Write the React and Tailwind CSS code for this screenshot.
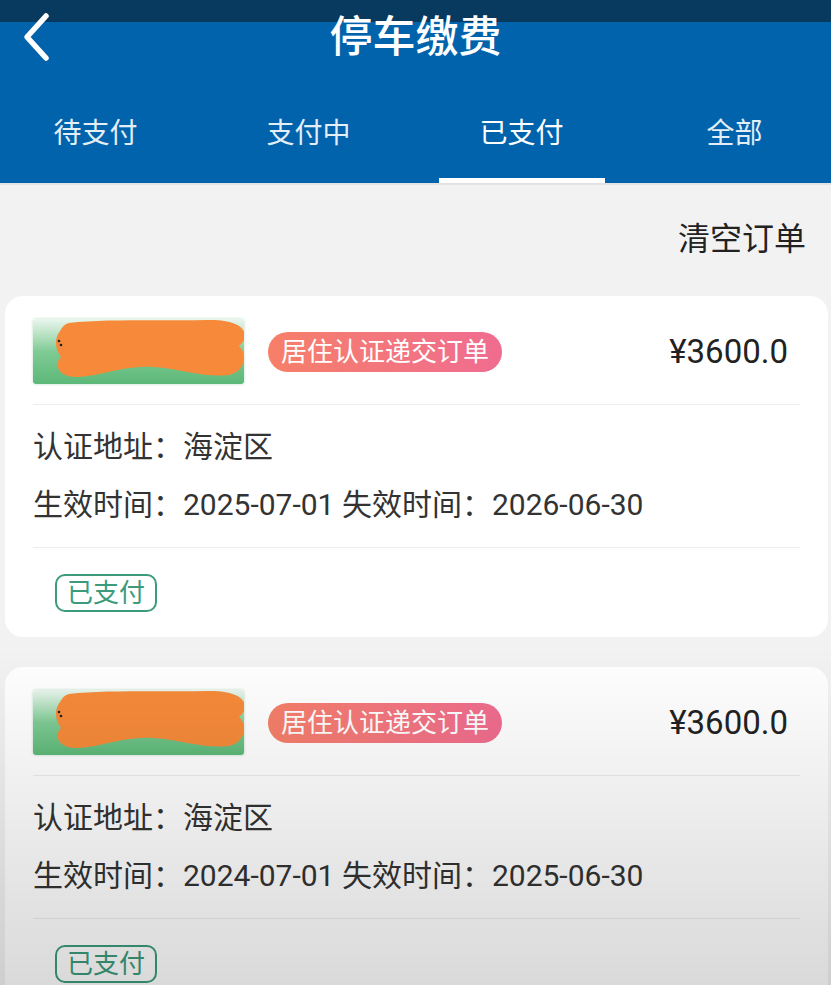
import React from 'react';

const orders = [
    { addr: '海淀区', start: '2025-07-01', end: '2026-06-30' },
    { addr: '海淀区', start: '2024-07-01', end: '2025-06-30' },
];

const tabs = ['待支付', '支付中', '已支付', '全部'];

function Plate() {
    return (
        <div className="relative w-[211px] h-[65px] shrink-0 rounded-[3px] bg-gradient-to-b from-[#eaf6ee] via-[#7fcb95] to-[#5cb878] shadow-[0_0_3px_rgba(80,170,110,0.4)]">
            <svg className="absolute inset-0" width="211" height="65" viewBox="0 0 211 65">
                <path
                    d="M36 4 C70 0 120 2 175 1 C214 0 218 18 206 27 C215 35 212 53 196 56 C170 59 150 50 120 48 C90 46 70 57 45 58 C26 59 20 46 28 38 C22 30 21 20 27 12 C30 7 32 5 36 4 Z"
                    fill="#f68a3a"
                />
                <circle cx="26" cy="22" r="1.3" fill="#222" />
                <circle cx="28" cy="26" r="1.3" fill="#222" />
            </svg>
        </div>
    );
}

function OrderCard({ o }) {
    return (
        <div className="mx-[5px] mr-[3px] rounded-[18px] bg-white px-[28px] pt-[23px] pb-[25px]">
            <div className="flex items-center pr-[12px]">
                <Plate />
                <div className="ml-[24px] h-[40px] px-[13px] flex items-center rounded-full bg-gradient-to-r from-[#f67f68] to-[#f06c90] text-white text-[26px] leading-none">
                    居住认证递交订单
                </div>
                <div className="ml-auto text-[33px] leading-none text-[#222]">¥3600.0</div>
            </div>
            <div className="mt-[20px] h-[1px] bg-[#ececec]" />
            <div className="mt-[27px] text-[30px] leading-[30px] text-[#333]">认证地址：{o.addr}</div>
            <div className="mt-[28px] text-[30px] leading-[30px] text-[#333]">
                生效时间：{o.start} 失效时间：{o.end}
            </div>
            <div className="mt-[27px] h-[1px] bg-[#ececec]" />
            <div className="mt-[26px] ml-[22px] w-[102px] h-[38px] flex items-center justify-center rounded-[10px] border-2 border-[#3b9b7b] text-[#3b9b7b] text-[26px] leading-none">
                已支付
            </div>
        </div>
    );
}

export default function App() {
    return (
        <div className="relative w-[831px] h-[985px] overflow-hidden bg-[#f2f2f2] font-['Roboto','Noto_Sans_CJK_SC',sans-serif]">
            <div className="h-[183px] flex flex-col bg-[linear-gradient(to_bottom,#08395e_22px,#0263ad_22px)] text-white">
                <div className="h-[74px] grid grid-cols-[80px_1fr_80px] items-center">
                    <svg width="80" height="74" viewBox="0 0 80 74">
                        <polyline points="46,16 27,37 46,58" fill="none" stroke="#fff" strokeWidth="5.5" strokeLinecap="round" strokeLinejoin="round" />
                    </svg>
                    <div className="text-center text-[43px] leading-none font-medium">停车缴费</div>
                    <div />
                </div>
                <div className="flex flex-1 ml-[-11px]">
                    {tabs.map((t, i) => (
                        <div key={t} className="w-[213px] shrink-0 flex flex-col items-center">
                            <div className={`pt-[46px] text-[28px] leading-[28px] ${i === 2 ? 'text-white' : 'text-[#e4eef7]'}`}>{t}</div>
                            <div className={`mt-auto h-[5px] w-[166px] ${i === 2 ? 'bg-white' : 'bg-transparent'}`} />
                        </div>
                    ))}
                </div>
            </div>
            <div className="h-[2px] bg-[#e2e2e2]" />
            <div className="pt-[38px] pr-[25px] text-right text-[32px] leading-[32px] text-[#222]">清空订单</div>
            <div className="mt-[41px] flex flex-col gap-[30px]">
                {orders.map((o, i) => (
                    <OrderCard key={i} o={o} />
                ))}
            </div>
            <div className="pointer-events-none absolute left-0 right-0 bottom-0 h-[340px] bg-gradient-to-b from-transparent to-[rgba(0,0,0,0.15)]" />
        </div>
    );
}
